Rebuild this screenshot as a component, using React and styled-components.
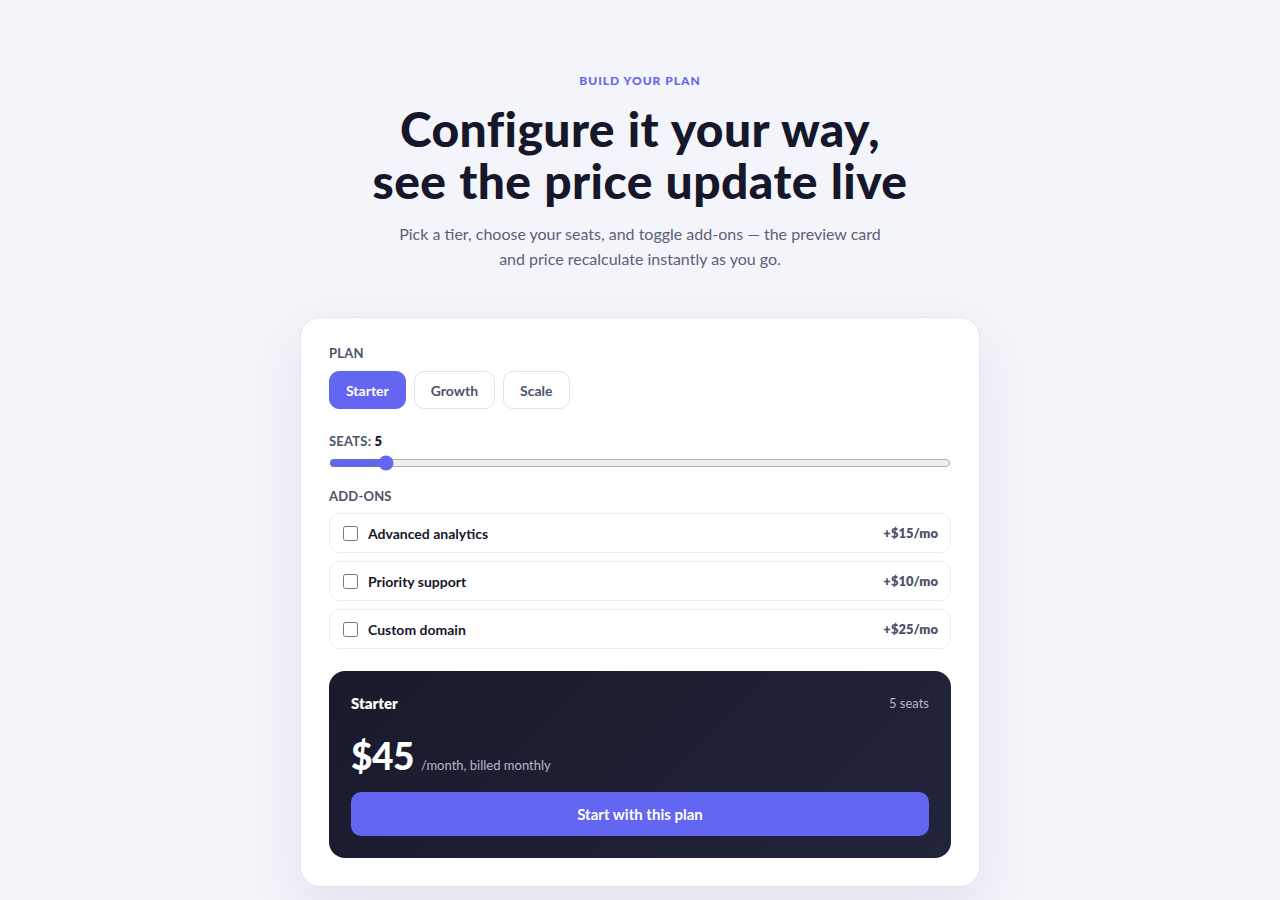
import React, { useState } from 'react';
import styled, { createGlobalStyle } from 'styled-components';

const GlobalStyle = createGlobalStyle`
  * { box-sizing: border-box; }
  body {
    margin: 0;
    background: #f4f5fa;
    font-family: Lato, "Liberation Sans", sans-serif;
    color: #16172a;
  }
`;

const PLANS = [
  { id: 'starter', name: 'Starter', perSeat: 9 },
  { id: 'growth', name: 'Growth', perSeat: 19 },
  { id: 'scale', name: 'Scale', perSeat: 39 },
];

const ADDONS = [
  { id: 'analytics', name: 'Advanced analytics', price: 15 },
  { id: 'support', name: 'Priority support', price: 10 },
  { id: 'domain', name: 'Custom domain', price: 25 },
];

const Page = styled.main`
  display: flex;
  flex-direction: column;
  align-items: center;
  padding: 73px 20px 14px;
`;

const Eyebrow = styled.div`
  font-size: 12px;
  font-weight: 900;
  letter-spacing: 1px;
  color: #6366f1;
  text-transform: uppercase;
`;

const Title = styled.h1`
  margin: 15px 0 0;
  font-size: 48px;
  line-height: 52px;
  font-weight: 900;
  text-align: center;
  color: #16172a;
  letter-spacing: 0.4px;
  word-spacing: 1px;
`;

const Lead = styled.p`
  margin: 14px 0 0;
  max-width: 500px;
  font-size: 16px;
  line-height: 25px;
  text-align: center;
  color: #5b6175;
`;

const Panel = styled.section`
  margin-top: 46px;
  width: 680px;
  background: #fff;
  border: 1px solid #e4e4f2;
  border-radius: 20px;
  padding: 27px 28px 28px;
  box-shadow: 0 24px 60px rgba(90, 90, 160, 0.12);
`;

const Label = styled.div`
  font-size: 13px;
  font-weight: 700;
  color: #4d5368;
  text-transform: uppercase;
  letter-spacing: 0.2px;
  margin-bottom: ${p => p.$gap || 10}px;

  b {
    color: #16172a;
    font-weight: 800;
  }
`;

const Tiers = styled.div`
  display: flex;
  gap: 8px;
  margin-bottom: 24px;
`;

const Tier = styled.button`
  height: 38px;
  padding: 0 16px;
  border-radius: 10px;
  font-family: inherit;
  font-size: 14px;
  font-weight: 700;
  cursor: pointer;
  border: 1px solid ${p => (p.$active ? '#6366f1' : '#e2e2ef')};
  background: ${p => (p.$active ? '#6366f1' : '#fff')};
  color: ${p => (p.$active ? '#fff' : '#4d5368')};
`;

const Range = styled.input`
  display: block;
  width: 100%;
  margin: 0 0 17px;
  accent-color: #6366f1;
`;

const AddonList = styled.div`
  display: flex;
  flex-direction: column;
  gap: 8px;
`;

const AddonRow = styled.label`
  display: flex;
  align-items: center;
  height: 40px;
  padding: 0 12px 0 13px;
  border: 1px solid #ececf4;
  border-radius: 10px;
  cursor: pointer;

  input {
    margin: 0 10px 0 0;
    width: 15px;
    height: 15px;
  }
`;

const AddonName = styled.span`
  flex: 1;
  font-size: 14px;
  font-weight: 700;
  color: #16172a;
`;

const AddonPrice = styled.span`
  font-size: 13px;
  font-weight: 800;
  color: #4d5368;
`;

const Preview = styled.div`
  margin-top: 22px;
  border-radius: 16px;
  padding: 23px 22px 22px;
  background: linear-gradient(135deg, #191a2b 0%, #22243c 100%);
  color: #fff;
`;

const PreviewHead = styled.div`
  display: flex;
  justify-content: space-between;
  align-items: center;
`;

const PlanName = styled.div`
  font-size: 15px;
  font-weight: 800;
`;

const Seats = styled.div`
  font-size: 13px;
  color: #b4b8cc;
`;

const PriceLine = styled.div`
  display: flex;
  align-items: baseline;
  gap: 7px;
  margin-top: 21px;
`;

const Amount = styled.span`
  font-size: 37px;
  font-weight: 900;
  letter-spacing: -0.5px;
`;

const Period = styled.span`
  font-size: 13px;
  color: #b4b8cc;
`;

const Cta = styled.button`
  display: block;
  width: 100%;
  height: 44px;
  margin-top: 14px;
  border: 0;
  border-radius: 10px;
  background: #6366f1;
  color: #fff;
  font-family: inherit;
  font-size: 15px;
  font-weight: 700;
  cursor: pointer;
`;

export default function App() {
  const [planId, setPlanId] = useState('starter');
  const [seats, setSeats] = useState(5);
  const [picked, setPicked] = useState({});

  const plan = PLANS.find(p => p.id === planId);
  const extras = ADDONS.reduce((sum, a) => sum + (picked[a.id] ? a.price : 0), 0);
  const total = plan.perSeat * seats + extras;

  return (
    <>
      <GlobalStyle />
      <Page>
        <Eyebrow>Build your plan</Eyebrow>
        <Title>
          Configure it your way,
          <br />
          see the price update live
        </Title>
        <Lead>
          Pick a tier, choose your seats, and toggle add-ons — the preview card
          and price recalculate instantly as you go.
        </Lead>

        <Panel>
          <Label>Plan</Label>
          <Tiers>
            {PLANS.map(p => (
              <Tier key={p.id} $active={p.id === planId} onClick={() => setPlanId(p.id)}>
                {p.name}
              </Tier>
            ))}
          </Tiers>

          <Label $gap={6}>
            Seats: <b>{seats}</b>
          </Label>
          <Range
            type="range"
            min={1}
            max={50}
            value={seats}
            onChange={e => setSeats(Number(e.target.value))}
          />

          <Label $gap={9}>Add-ons</Label>
          <AddonList>
            {ADDONS.map(a => (
              <AddonRow key={a.id}>
                <input
                  type="checkbox"
                  checked={!!picked[a.id]}
                  onChange={() => setPicked(s => ({ ...s, [a.id]: !s[a.id] }))}
                />
                <AddonName>{a.name}</AddonName>
                <AddonPrice>+${a.price}/mo</AddonPrice>
              </AddonRow>
            ))}
          </AddonList>

          <Preview>
            <PreviewHead>
              <PlanName>{plan.name}</PlanName>
              <Seats>{seats} seats</Seats>
            </PreviewHead>
            <PriceLine>
              <Amount>${total}</Amount>
              <Period>/month, billed monthly</Period>
            </PriceLine>
            <Cta>Start with this plan</Cta>
          </Preview>
        </Panel>
      </Page>
    </>
  );
}
